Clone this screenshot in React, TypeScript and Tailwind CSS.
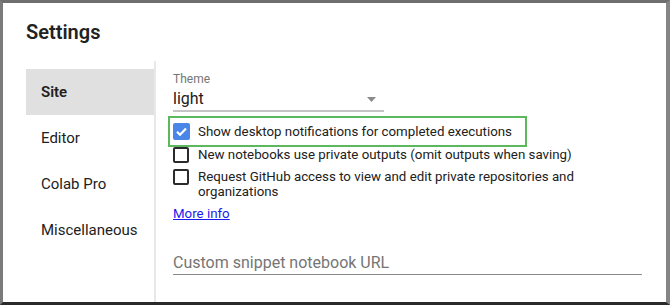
import React from "react";

function Checkbox({ checked }: { checked?: boolean }) {
  if (checked) {
    return (
      <span className="w-[17px] h-[17px] shrink-0 rounded-[2px] bg-[#4a86e8] flex items-center justify-center">
        <svg width="13" height="13" viewBox="0 0 13 13" fill="none">
          <path d="M2 6.8l3 3L11 3.6" stroke="white" strokeWidth="2.2" />
        </svg>
      </span>
    );
  }
  return <span className="w-[16px] h-[16px] shrink-0 rounded-[2px] border-2 border-[#2b2b2b] bg-white" />;
}

const navItems = ["Site", "Editor", "Colab Pro", "Miscellaneous"];

export default function App() {
  return (
    <div className="w-[670px] h-[305px] bg-white font-['Roboto','Liberation_Sans',sans-serif] text-[#212121] box-border border-t-[3px] border-l-[3px] border-r-[4px] border-b-[3px] border-t-[#6e6e6e] border-l-[#7a7a7a] border-r-[#858585] border-b-[#2a2a2a] flex flex-col overflow-hidden">
      <h1 className="pl-[23px] pt-[17px] text-[20px] leading-[24px] font-semibold text-[#222]">Settings</h1>

      <div className="flex flex-1 mt-[17px] pl-[23px]">
        {/* left nav */}
        <div className="w-[128px] pt-[8px] flex flex-col">
          {navItems.map((item, i) => (
            <div
              key={item}
              className={
                i === 0
                  ? "h-[46px] flex items-center pl-[15px] text-[15px] font-semibold bg-[#e0e0e0]"
                  : "h-[46px] flex items-center pl-[15px] text-[15px]"
              }
            >
              {item}
            </div>
          ))}
        </div>

        <div className="w-[2px] bg-[#e8e8e8]" />

        {/* content */}
        <div className="pl-[17px] pt-[11px] w-[486px] flex flex-col">
          <div className="text-[12px] leading-[14px] text-[#757575]">Theme</div>
          <div className="mt-[3px] w-[211px] border-b-[2px] border-[#c4c4c4] flex items-center justify-between pb-[1px]">
            <span className="text-[16px] leading-[20px]">light</span>
            <svg width="9" height="5" viewBox="0 0 9 5" className="mr-[8px]">
              <path d="M0 0h9L4.5 5z" fill="#8a8a8a" />
            </svg>
          </div>

          <div className="mt-[4px] -ml-[5px] w-fit border-2 border-[#5cb85c] h-[31px] pl-[3px] pr-[13px] flex items-center gap-[8px]">
            <Checkbox checked />
            <span className="text-[13.3px] leading-[16px]">Show desktop notifications for completed executions</span>
          </div>

          <div className="mt-[0px] flex items-start gap-[9px]">
            <Checkbox />
            <span className="text-[13.3px] leading-[16px]">New notebooks use private outputs (omit outputs when saving)</span>
          </div>

          <div className="mt-[6px] flex items-start gap-[9px]">
            <Checkbox />
            <span className="text-[13.3px] leading-[15px]">
              Request GitHub access to view and edit private repositories and organizations
            </span>
          </div>

          <a href="#" className="mt-[7px] text-[13.3px] leading-[16px] text-[#1a1aee] underline w-fit">
            More info
          </a>

          <div className="mt-[31px] w-[469px] border-b border-[#8a8a8a] text-[16px] leading-[20px] text-[#757575] pb-[1px]">
            Custom snippet notebook URL
          </div>
        </div>
      </div>
    </div>
  );
}
